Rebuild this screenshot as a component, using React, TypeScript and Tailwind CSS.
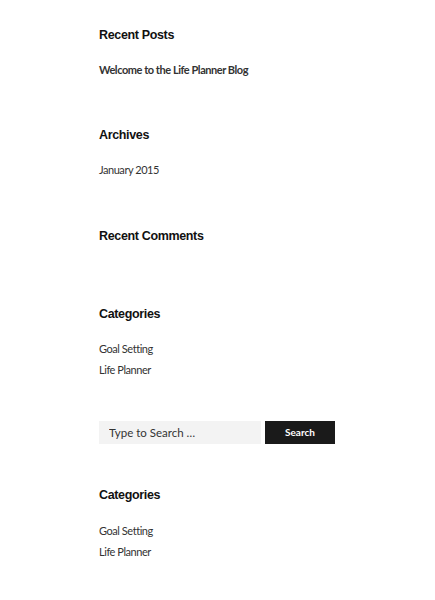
import React from "react"

const heading = "text-[12.5px] font-bold leading-[20px] tracking-[-0.35px] text-[#111] font-['Liberation_Sans',Arial,sans-serif]"
const item = "text-[11px] leading-[21px] tracking-[-0.45px] text-[#333] font-['Lato',sans-serif]"

function Widget({ title, items, bold, listGap = "mt-[14px]", className }: { title: string; items: string[]; bold?: boolean; listGap?: string; className?: string }) {
  return (
    <section className={className}>
      <h2 className={heading}>{title}</h2>
      {items.length > 0 && (
        <ul className={listGap}>
          {items.map((t) => (
            <li key={t} className={`${item} ${bold ? "font-bold text-[#2a2a2a]" : ""}`}>
              {t}
            </li>
          ))}
        </ul>
      )}
    </section>
  )
}

export default function App() {
  return (
    <div className="min-h-[600px] bg-white pl-[99px] pr-[100px] pt-[25px]">
      <Widget title="Recent Posts" items={["Welcome to the Life Planner Blog"]} bold />
      <Widget title="Archives" items={["January 2015"]} className="mt-[45px]" />
      <Widget title="Recent Comments" items={[]} className="mt-[46px]" />
      <Widget title="Categories" items={["Goal Setting", "Life Planner"]} className="mt-[58px]" />

      {/* search */}
      <form className="mt-[41px] flex gap-[4px]">
        <input
          type="text"
          placeholder="Type to Search …"
          className="w-[162px] h-[23px] bg-[#f3f3f3] px-[10px] text-[11.5px] text-[#333] placeholder:text-[#333] font-['Lato',sans-serif] outline-none"
        />
        <button
          type="button"
          className="w-[70px] h-[23px] bg-[#1a1a1a] text-white text-[10px] font-bold font-['Lato',sans-serif]"
        >
          Search
        </button>
      </form>

      <Widget title="Categories" items={["Goal Setting", "Life Planner"]} listGap="mt-[15px]" className="mt-[41px]" />
    </div>
  )
}
